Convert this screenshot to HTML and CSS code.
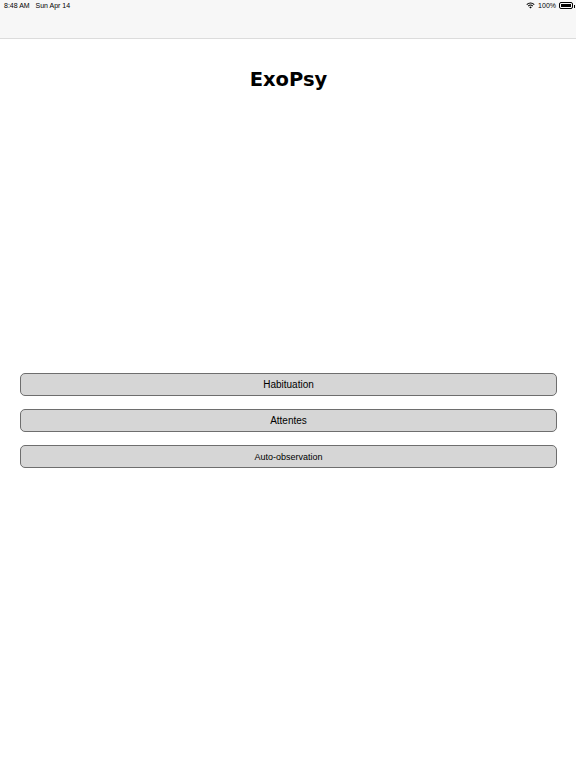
FILE: index.html
```html
<!DOCTYPE html>
<html lang="fr">
<head>
    <meta charset="UTF-8">
    <meta name="viewport" content="width=device-width, initial-scale=1.0">
    <title>ExoPsy</title>
    <link rel="stylesheet" href="styles.css">
</head>
<body>
    <header class="topbar">
        <div class="status">
            <span class="time">8:48 AM&nbsp;&nbsp;&nbsp;Sun Apr 14</span>
            <span class="status-right">
                <svg class="wifi" viewBox="0 0 12 9" width="9" height="7">
                    <path d="M6 8.5 L4.3 6.7 A2.5 2.5 0 0 1 7.7 6.7 Z" fill="#000"/>
                    <path d="M2.9 5.3 A4.5 4.5 0 0 1 9.1 5.3" stroke="#000" stroke-width="1.4" fill="none"/>
                    <path d="M1 3.3 A7.2 7.2 0 0 1 11 3.3" stroke="#000" stroke-width="1.4" fill="none"/>
                </svg>
                <span>100%</span>
                <span class="battery"><span class="battery-fill"></span></span>
            </span>
        </div>
    </header>

    <main class="content">
        <h1 class="title">ExoPsy</h1>

        <div class="menu">
            <button class="menu-btn">Habituation</button>
            <button class="menu-btn">Attentes</button>
            <button class="menu-btn small">Auto-observation</button>
        </div>
    </main>
</body>
</html>
```

FILE: styles.css
```css
* {
    box-sizing: border-box;
    margin: 0;
    padding: 0;
}

body {
    background-color: #ffffff;
    color: #000;
    font-family: 'Liberation Sans', Arial, sans-serif;
    width: 576px;
    height: 768px;
    overflow: hidden;
}

.topbar {
    height: 39px;
    background-color: #f7f7f7;
    border-bottom: 1px solid #dcdcdc;
}

.status {
    display: flex;
    justify-content: space-between;
    align-items: center;
    height: 11px;
    padding: 0 3px 0 4px;
    font-size: 7px;
}

.status-right {
    display: flex;
    align-items: center;
    gap: 3px;
}

.battery {
    display: inline-block;
    width: 14px;
    height: 7px;
    border: 1px solid #000;
    border-radius: 2px;
    padding: 1px;
    position: relative;
}

.battery::after {
    content: '';
    position: absolute;
    right: -3px;
    top: 1.5px;
    width: 1.5px;
    height: 3px;
    background: #000;
}

.battery-fill {
    display: block;
    width: 100%;
    height: 100%;
    background: #000;
}

.content {
    padding: 0 19px 0 20px;
}

.title {
    text-align: center;
    font-family: 'DejaVu Sans', sans-serif;
    font-weight: bold;
    font-size: 19.5px;
    margin-top: 27px;
    line-height: 28px;
}

.menu {
    display: flex;
    flex-direction: column;
    gap: 13px;
    margin-top: 279px;
}

.menu-btn {
    height: 23px;
    width: 100%;
    background-color: #d6d6d6;
    border: 1px solid #6e6e6e;
    border-radius: 5px;
    font-family: 'Liberation Sans', Arial, sans-serif;
    font-size: 10px;
    color: #000;
}

.menu-btn.small {
    font-size: 9px;
}
```
